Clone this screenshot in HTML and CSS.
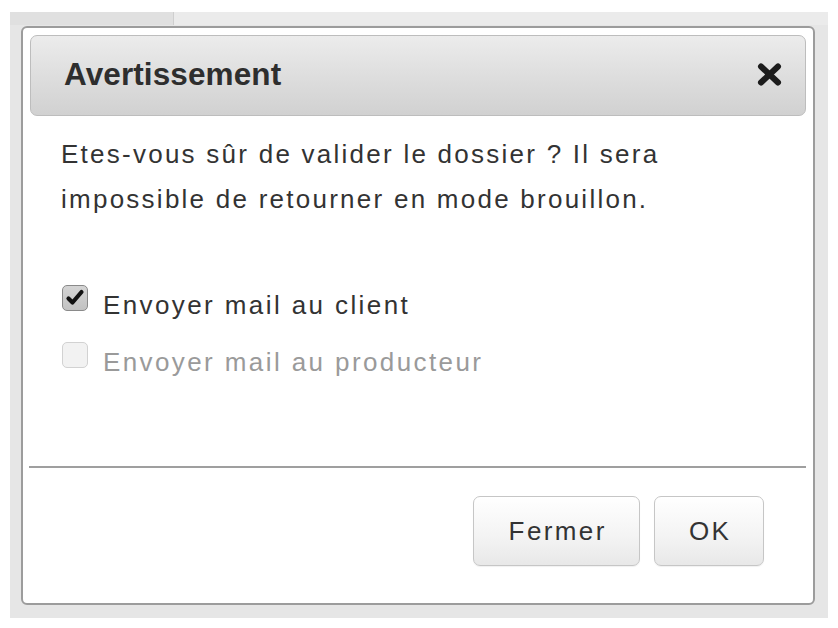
FILE: index.html
```html
<!DOCTYPE html>
<html lang="fr">
<head>
<meta charset="utf-8">
<title>Avertissement</title>
<link rel="stylesheet" href="styles.css">
</head>
<body>
<div class="backdrop">
  <div class="dialog">
    <div class="dialog-header">
      <h1 class="dialog-title">Avertissement</h1>
      <button class="close-btn" aria-label="Fermer">
        <svg width="27" height="25" viewBox="0 0 27 25"><path d="M5 4.5 L22 20.5 M22 4.5 L5 20.5" stroke="#1c1c1c" stroke-width="6" stroke-linecap="round"/></svg>
      </button>
    </div>
    <div class="dialog-body">
      <p class="message">Etes-vous sûr de valider le dossier ? Il sera impossible de retourner en mode brouillon.</p>
      <div class="options">
        <label class="option">
          <span class="checkbox checked">
            <svg width="20" height="18" viewBox="0 0 20 18"><path d="M3.5 9.5 L7.5 13.5 L16.5 3" fill="none" stroke="#111" stroke-width="4.2" stroke-linecap="round" stroke-linejoin="round"/></svg>
          </span>
          <span class="option-label">Envoyer mail au client</span>
        </label>
        <label class="option disabled">
          <span class="checkbox"></span>
          <span class="option-label">Envoyer mail au producteur</span>
        </label>
      </div>
    </div>
    <div class="separator"></div>
    <div class="dialog-footer">
      <button class="btn btn-close">Fermer</button>
      <button class="btn btn-ok">OK</button>
    </div>
  </div>
</div>
</body>
</html>
```

FILE: styles.css
```css
html, body {
  margin: 0;
  padding: 0;
  background: #ffffff;
}

body {
  font-family: "Liberation Sans", Arial, sans-serif;
  color: #333333;
}

.backdrop {
  margin: 12px 10px 10px 10px;
  width: 818px;
  height: 606px;
  box-sizing: border-box;
  padding: 14px 13px 13px 11px;
  background:
    linear-gradient(to right, #e0e0e0 0, #e0e0e0 163px, #cfcfcf 163px, #cfcfcf 164px, #ebebeb 164px) top left / 100% 13px no-repeat,
    #e6e6e6;
}

.dialog {
  height: 579px;
  box-sizing: border-box;
  border: 2px solid #9c9c9c;
  border-radius: 6px;
  background: #ffffff;
  padding: 7px 7px 0 7px;
  display: flex;
  flex-direction: column;
}

.dialog-header {
  height: 81px;
  flex: none;
  box-sizing: border-box;
  border: 1px solid #bdbdbd;
  border-radius: 7px;
  background: linear-gradient(to bottom, #ececec 0%, #dedede 50%, #d1d1d1 100%);
  display: flex;
  align-items: center;
  justify-content: space-between;
  padding: 0 22px 2px 33px;
}

.dialog-title {
  margin: 0;
  font-size: 31.5px;
  line-height: 1;
  font-weight: bold;
  color: #2e2e2e;
  letter-spacing: 0.1px;
}

.close-btn {
  border: 0;
  background: none;
  padding: 0;
  margin: 0;
  width: 27px;
  height: 25px;
  display: flex;
}

.dialog-body {
  padding: 16px 31px 0 31px;
  height: 350px;
  flex: none;
  box-sizing: border-box;
}

.message {
  margin: 0;
  font-size: 26px;
  line-height: 45px;
  letter-spacing: 2.25px;
  color: #333333;
  width: 660px;
}

.options {
  margin-top: 55px;
  display: flex;
  flex-direction: column;
}

.option {
  height: 57px;
  display: flex;
  align-items: flex-start;
  font-size: 26px;
  line-height: 56px;
  letter-spacing: 2.4px;
  color: #333333;
}

.option.disabled {
  color: #9a9a9a;
}

.checkbox {
  width: 26px;
  height: 26px;
  box-sizing: border-box;
  margin: 8px 15px 0 1px;
  border: 1px solid #b4b4b4;
  border-radius: 5px;
  background: linear-gradient(to bottom, #f4f4f4, #e6e6e6);
  display: flex;
  align-items: center;
  justify-content: center;
}

.checkbox.checked {
  border-color: #8a8a8a;
  background: linear-gradient(to bottom, #d4d4d4, #c2c2c2);
}

.option.disabled .checkbox {
  border-color: #d2d2d2;
  background: #f2f2f2;
}

.separator {
  height: 2px;
  flex: none;
  background: #9f9f9f;
  margin: 0 0 0 -1px;
}

.dialog-footer {
  display: flex;
  justify-content: flex-end;
  gap: 14px;
  padding: 28px 42px 0 0;
}

.btn {
  height: 70px;
  box-sizing: border-box;
  border: 1px solid #c6c6c6;
  border-radius: 7px;
  background: linear-gradient(to bottom, #ffffff 0%, #f3f3f3 60%, #e8e8e8 100%);
  box-shadow: 0 1px 1px rgba(0, 0, 0, 0.06);
  font-family: "Liberation Sans", Arial, sans-serif;
  font-size: 26px;
  letter-spacing: 2.4px;
  text-indent: 2.4px;
  color: #333333;
  padding: 0;
}

.btn-close {
  width: 167px;
}

.btn-ok {
  width: 110px;
}
```
